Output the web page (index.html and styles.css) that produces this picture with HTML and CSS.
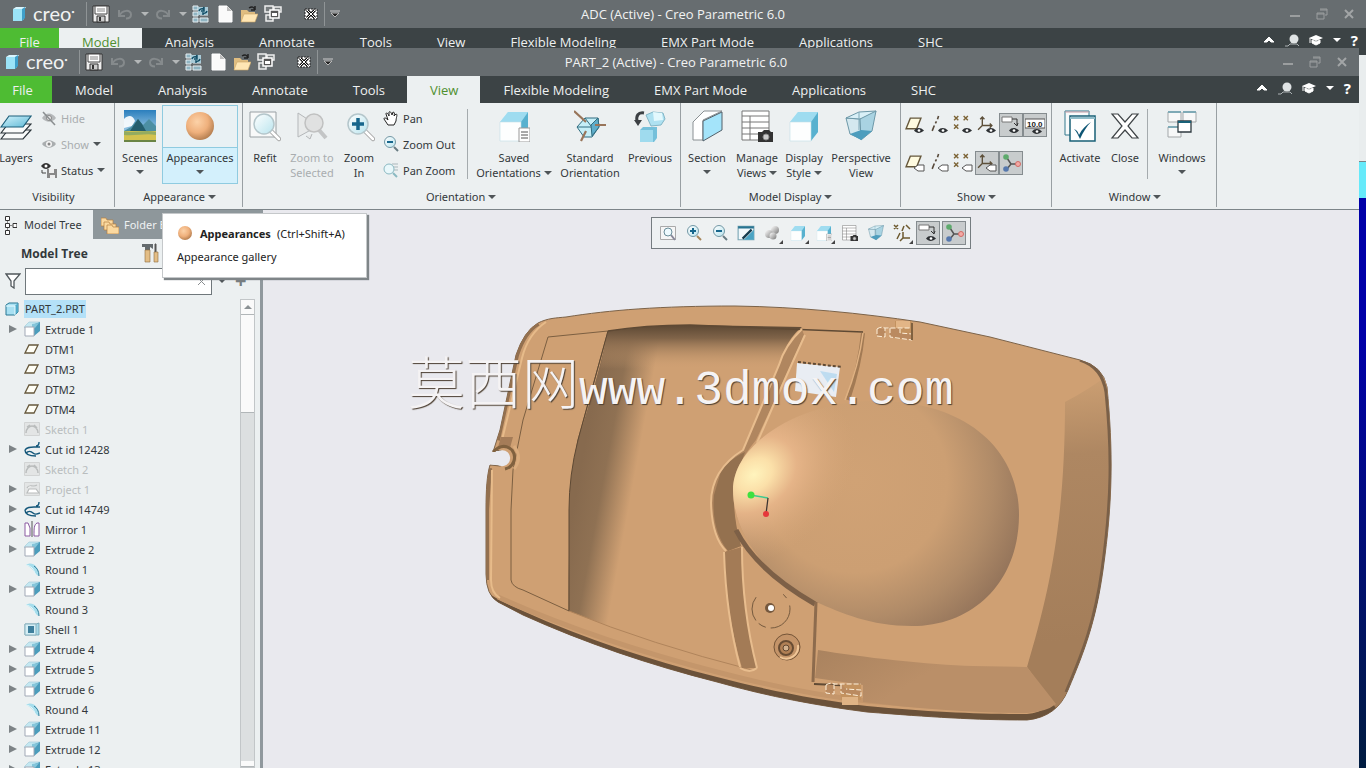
FILE: index.html
```html
<!DOCTYPE html>
<html lang="en">
<head>
<meta charset="utf-8">
<title>PART_2 (Active) - Creo Parametric 6.0</title>
<link rel="stylesheet" href="styles.css">
</head>
<body>
<svg class="defs" aria-hidden="true">
<defs>
<linearGradient id="gCyan" x1="0" y1="0" x2="1" y2="1"><stop offset="0" stop-color="#d4f3fc"/><stop offset="1" stop-color="#5db9d6"/></linearGradient>
<linearGradient id="gLens" x1="0" y1="0" x2="1" y2="1"><stop offset="0" stop-color="#fff"/><stop offset="1" stop-color="#b9e4ee"/></linearGradient>
<linearGradient id="gSky" x1="0" y1="0" x2="0" y2="1"><stop offset="0" stop-color="#2b7fbd"/><stop offset="1" stop-color="#d5eef8"/></linearGradient>
<radialGradient id="gBall" cx=".4" cy=".35" r=".65"><stop offset="0" stop-color="#fcd2a8"/><stop offset=".6" stop-color="#efb07c"/><stop offset="1" stop-color="#b98253"/></radialGradient>
<linearGradient id="gMetal" x1="0" y1="0" x2="1" y2="1"><stop offset="0" stop-color="#fff"/><stop offset="1" stop-color="#777"/></linearGradient>

<symbol id="logo" viewBox="0 0 16 16"><path d="M2 3l3-2h10l-2 3v9l-3 2H2z" fill="#d9f5fd"/><path d="M2 3h9v12H2z" fill="#9be3f7"/><path d="M11 3l3-2v11l-3 3z" fill="#3f9fca"/></symbol>
<symbol id="save" viewBox="0 0 18 18"><path d="M1 1h16v16H1z" fill="#eee" stroke="#333"/><path d="M3 1h12v8H3z" fill="#fff" stroke="#444"/><path d="M5 4h8M5 6h8" stroke="#888"/><path d="M5 11h8v6H5z" fill="#ccc" stroke="#333"/><path d="M7 12h2v4H7z" fill="#333"/></symbol>
<symbol id="undo" viewBox="0 0 18 18"><path d="M3 5v6h6M3.500 10.500C6 5 15 4 15 9.500c0 3-2 4-5 4" fill="none" stroke="#858a8c" stroke-width="2"/></symbol>
<symbol id="redo" viewBox="0 0 18 18"><path d="M15 5v6H9M14.500 10.500C12 5 3 4 3 9.500c0 3 2 4 5 4" fill="none" stroke="#858a8c" stroke-width="2"/></symbol>
<symbol id="regen" viewBox="0 0 18 18"><path d="M1 1h5v4H1zM1 7h5v4H1zM1 13h5v4H1zM8 13h8v4H8zM8 10h8" fill="#8fb4c2" stroke="#e6eef1"/><path d="M6 2h10v8H6z" fill="#a9cbd8"/><path d="M7 6a3 3 0 0 1 4-2l1-2v4H9M15 6a3 3 0 0 1-4 2v2" fill="none" stroke="#145068" stroke-width="1.500"/></symbol>
<symbol id="new" viewBox="0 0 18 18"><path d="M3 1h8l5 5v11H3z" fill="#fafafa" stroke="#fff"/><path d="M11 1v5h5z" fill="#bbb"/></symbol>
<symbol id="open" viewBox="0 0 18 18"><path d="M1 5h6l2 2h6v10H1z" fill="#e0bd80"/><path d="M4 9h14l-3 8H1z" fill="#ffe6b4" stroke="#c9a565" stroke-width=".6"/><path d="M9 3c3-2 5-1 6 2m0 0V1m0 4h-4" stroke="#222" stroke-width="1.500" fill="none"/></symbol>
<symbol id="wins" viewBox="0 0 18 18"><path d="M1 1h8v6H1zM10 2h7v5h-7zM2 10h7v6H2z" fill="#777c7e" stroke="#eee" stroke-width="1.500"/><path d="M6 5h9v8H6z" fill="#555" stroke="#fff" stroke-width="1.500"/><path d="M8 8h5v3H8z" fill="#fff"/></symbol>
<symbol id="closex" viewBox="0 0 16 16"><path d="M2 3h12v10H2z" fill="#fff" stroke="#222" stroke-dasharray="2 1"/><path d="M4 4l8 8M12 4l-8 8" stroke="#111" stroke-width="3"/><path d="M4 4l8 8M12 4l-8 8" stroke="#fff"/></symbol>
<symbol id="overflow" viewBox="0 0 12 12"><path d="M1 3h10" stroke="#ccc"/><path d="M2 5h8l-4 4z" fill="#222" stroke="#bbb"/></symbol>
<symbol id="caret" viewBox="0 0 8 6"><path d="M0 1h8L4 5z" fill="currentColor"/></symbol>
<symbol id="min" viewBox="0 0 12 12"><path d="M1 8h10" stroke="#9b9e9f" stroke-width="2"/></symbol>
<symbol id="restore" viewBox="0 0 12 12"><path d="M4 1h7v6H9M1 5h7v6H1zM1 6h7M4 2h7" fill="none" stroke="#9b9e9f"/></symbol>
<symbol id="x" viewBox="0 0 12 12"><path d="M2 2l8 8M10 2l-8 8" stroke="#a2a5a6" stroke-width="2"/></symbol>
<symbol id="clear" viewBox="0 0 12 12"><path d="M3 3l7 7M10 3l-7 7" stroke="#8b8f91"/></symbol>
<symbol id="up" viewBox="0 0 12 12"><path d="M1 8l5-5 5 5H8L6 6 4 8z" fill="#fff" stroke="#fff"/></symbol>
<symbol id="user" viewBox="0 0 14 14"><circle cx="9" cy="6" r="4.500" fill="#dfe3e4"/><path d="M0 13h3l2-2h7l2 2" stroke="#adb3b5" fill="none"/></symbol>
<symbol id="grad" viewBox="0 0 14 14"><path d="M7 2l7 3-7 3-7-3z" fill="#fff"/><path d="M3 7l4 2 4-2v3l-4 2-4-2zM1 5v5" fill="#fff" stroke="#fff"/></symbol>

<symbol id="layers" viewBox="0 0 32 32"><g stroke="#283238" stroke-width="1.200" fill="#f9fbfb"><path d="M1 29l7-9h23l-8 9z"/><path d="M1 23l7-9h23l-8 9z"/><path d="M1 17L9 6h22l-8 11z" fill="url(#gCyan)" stroke="#1d5f7a"/></g></symbol>
<symbol id="hide" viewBox="0 0 16 16"><path d="M1 8c4-6 10-6 14 0-4 5-10 5-14 0z" fill="#b5b8ba"/><circle cx="8" cy="8" r="2.500" fill="#eee" stroke="#888"/><path d="M2 2l12 13" stroke="#8b8f91" stroke-width="1.500"/></symbol>
<symbol id="show" viewBox="0 0 16 16"><path d="M1 8c4-5 10-5 14 0-4 5-10 5-14 0z" fill="#a9adaf"/><circle cx="8" cy="8" r="3" fill="#f4f4f4"/><circle cx="8" cy="8" r="1.500" fill="#888"/></symbol>
<symbol id="status" viewBox="0 0 16 16"><path d="M0 4c3-4 7-4 10 0-3 4-7 4-10 0z" fill="#333"/><circle cx="5" cy="4" r="1.500" fill="#fff"/><path d="M1 8v3h4" stroke="#444" fill="none"/><path d="M6 7h10v9H6z" fill="#888"/><path d="M8 7h5v4H8zM9 13h5v3H9z" fill="#eee"/></symbol>
<symbol id="scenes" viewBox="0 0 32 32"><path d="M0 0h32v32H0z" fill="url(#gSky)"/><path d="M0 9c5-5 9-3 11 2l-3 5-8 2z" fill="#fff" opacity=".9"/><path d="M0 21l7-4 7-8 5 6 6-6 7 7v8H0z" fill="#4c8fa3"/><path d="M8 18l6-9 4 5 4 7H6z" fill="#245d6c"/><path d="M0 21h32v11H0z" fill="#d3c24f"/><path d="M0 21c10 3 20-2 32 1v3c-10-2-20 1-32 0z" fill="#94ab60"/><path d="M0 30h32v2H0z" fill="#6a8444"/></symbol>
<symbol id="ball" viewBox="0 0 32 32"><circle cx="16" cy="16" r="14" fill="url(#gBall)"/></symbol>
<symbol id="mag" viewBox="0 0 32 32"><path d="M22 21l8 8" stroke="#a5a5a5" stroke-width="4.500" stroke-linecap="round"/><path d="M22 21l8 8" stroke="#fff" stroke-width="2.500" stroke-linecap="round"/><circle cx="15" cy="14" r="10" fill="url(#gLens)" stroke="#b4c6cb" stroke-width="1.500"/></symbol>
<symbol id="refit" viewBox="0 0 32 32"><path d="M1 2h26v25H1z" fill="#f8f9f9" stroke="#99a0a4"/><use href="#mag"/></symbol>
<symbol id="zsel" viewBox="0 0 32 32"><path d="M2 3v24l20-11zM10 26l4 3 2-5" fill="#e8eaea" stroke="#b4b7b9"/><path d="M23 20l7 8" stroke="#c3c5c6" stroke-width="4"/><circle cx="18" cy="13" r="9" fill="#e0e1e1" stroke="#c0c1c1" stroke-width="1.500"/></symbol>
<symbol id="zin" viewBox="0 0 32 32"><use href="#mag"/><path d="M9 14h12M15 8v12" stroke="#17668c" stroke-width="3.500"/></symbol>
<symbol id="zinS" viewBox="0 0 16 16"><path d="M11 11l4 4" stroke="#a7865b" stroke-width="2"/><circle cx="7" cy="6" r="5.500" fill="url(#gLens)" stroke="#7398a5"/><path d="M4 6h6M7 3v6" stroke="#17668c" stroke-width="2"/></symbol>
<symbol id="zoutS" viewBox="0 0 16 16"><path d="M11 11l4 4" stroke="#687b82" stroke-width="2"/><circle cx="7" cy="6" r="5.500" fill="url(#gLens)" stroke="#7398a5"/><path d="M4 6h6" stroke="#17668c" stroke-width="2"/></symbol>
<symbol id="refitS" viewBox="0 0 16 16"><path d="M.5 1.500h15v13H.5z" fill="#f6f6f6" stroke="#aaa"/><path d="M11 10l4 5" stroke="#889" stroke-width="2"/><circle cx="8" cy="7" r="4" fill="#eefafe" stroke="#6a8d99"/></symbol>
<symbol id="hand" viewBox="0 0 16 16"><path d="M5 15L1 9c0-2 2-1 4 1L3 4c0-2 2-1 3 2L6 2c1-1 2 0 3 3l1-3c1 0 2 1 1 4l2-2c2 0 0 4 0 7l-2 4z" fill="#fff" stroke="#222"/></symbol>
<symbol id="pzoom" viewBox="0 0 16 16"><path d="M9 2h6M10 5h5M11 8h4" stroke="#aab7bb"/><circle cx="6" cy="7" r="5" fill="#e9f8fb" stroke="#8bb9c2"/><path d="M10 11l4 4" stroke="#8bb9c2" stroke-width="2"/></symbol>
<symbol id="cube" viewBox="0 0 32 32"><path d="M2 12L10 2h20v20l-8 9H2z" fill="#bfeaf7"/><path d="M2 12L10 2h20l-7 10z" fill="#9fdcf0"/><path d="M23 12l7-10v20l-7 9z" fill="#58b1cf"/><path d="M2 12h21v19H2z" fill="#fdfefe" stroke="#c4dfe7" stroke-width=".6"/></symbol>
<symbol id="saved" viewBox="0 0 32 32"><use href="#cube"/><path d="M21 18h11v14H21z" fill="#fff" stroke="#999"/><path d="M23 22h7M23 25h7M23 28h7" stroke="#555"/></symbol>
<symbol id="stdo" viewBox="0 0 32 32"><path d="M3 17l8-9h13l1 9-7 10H10z" fill="#c5eef7" stroke="#316d80"/><path d="M17 15l7-7 1 9-7 9z" fill="#5eaecb" stroke="#316d80"/><path d="M3 17h14M11 8l6 8" stroke="#316d80"/><path d="M0 1l12 11M21 15h11M12 21L7 31" stroke="#98755a" stroke-width="2.200"/></symbol>
<symbol id="prev" viewBox="0 0 32 32"><path d="M10 3c-6-1-8 3-7 8" fill="none" stroke="#3c4044" stroke-width="3"/><path d="M0 10h8l-4 6z" fill="#3c4044"/><path d="M12 5l7-3 10 1 2 6-4 6-10 1z" fill="#aee1f1" stroke="#83b6c6"/><path d="M19 2l9 1 1 7-9 1z" fill="#e3f8fd"/><path d="M6 20l3-3h14v11l-3 4H6z" fill="#75c0da"/><path d="M6 20h13v12H6z" fill="#9fdbee"/></symbol>
<symbol id="section" viewBox="0 0 32 32"><path d="M2 12L13 1h18L12 10v20H2z" fill="#fff" stroke="#8a9093"/><path d="M12 11l19-9v18l-19 11z" fill="#a4e4fa" stroke="#53616a"/></symbol>
<symbol id="manage" viewBox="0 0 32 32"><path d="M1 1h27v29H1z" fill="#fff" stroke="#777"/><path d="M1 6h27M1 12h27M1 18h27M1 24h27M9 6v24" stroke="#777"/><path d="M17 22h4l2-2h5l2 2h2v10H17z" fill="#333"/><circle cx="25" cy="27" r="3" fill="#ccc" stroke="#888"/></symbol>
<symbol id="persp" viewBox="0 0 32 32"><path d="M1 8l14 1 1 20L5 24z" fill="#d4e8ef" stroke="#6d98a8"/><path d="M1 8L14 2l17-1-4 8H15z" fill="#d9f0f7" stroke="#6d98a8"/><path d="M15 9l16-8-4 20-11 9z" fill="#a9d3e2" stroke="#6d98a8"/><path d="M5 24l11-4 11 1-11 9z" fill="#4d9dbd"/><path d="M14 2v18" stroke="#7fa9b8"/></symbol>
<symbol id="eye" viewBox="0 0 12 8"><path d="M0 4c3-4 8-4 12 0-4 4-9 4-12 0z" fill="#2d3033"/><circle cx="6" cy="4" r="1.600" fill="#fff"/></symbol>
<symbol id="tag" viewBox="0 0 12 8"><path d="M1 4l4-3h6v6H5z" fill="#fff" stroke="#555"/></symbol>
<symbol id="plane" viewBox="0 0 16 16"><path d="M1 12L5 2h10l-4 10z" fill="#fffbe0" stroke="#66583c" stroke-width="1.300"/></symbol>
<symbol id="axis" viewBox="0 0 16 16"><path d="M3 14l2-5M6 7l1-2M8 3l1-3" stroke="#57493a" stroke-width="1.500"/></symbol>
<symbol id="pts" viewBox="0 0 16 16"><path d="M1 1l4 4M5 1L1 5M10 1l4 4M14 1l-4 4M1 9l4 4M5 9l-4 4" stroke="#7c6436" stroke-width="1.300"/></symbol>
<symbol id="csys" viewBox="0 0 16 16"><path d="M5 1v8l-4 4M5 9h9M3 3l2-2 2 2M12 7l2 2-2 2" fill="none" stroke="#5d503a" stroke-width="1.300"/></symbol>
<symbol id="note" viewBox="0 0 20 20"><path d="M1 2h10v5H1z" fill="#fff" stroke="#777"/><path d="M11 4h5v6M13 8l3 3 1-3" stroke="#333" fill="none"/><use href="#eye" x="8" y="12" width="10" height="7"/></symbol>
<symbol id="spin" viewBox="0 0 20 20"><path d="M6 5l4 6-4 5M10 11h7" stroke="#555" stroke-width="1.500" fill="none"/><circle cx="5" cy="4" r="2.800" fill="#5daa6c"/><circle cx="5" cy="16" r="2.800" fill="#5678ad"/><circle cx="17" cy="11" r="2.500" fill="#f3aaa5" stroke="#d16b65"/></symbol>
<symbol id="activate" viewBox="0 0 32 32"><path d="M1 1h24v24H1z" fill="#f8fafb" stroke="#33798d"/><path d="M1 2h24" stroke="#c89da8"/><path d="M6 6h25v25H6z" fill="#fff" stroke="#186077" stroke-width="1.500"/><path d="M6 8h25" stroke="#90bdca" stroke-width="2"/><path d="M10 19c3 1 4 3 5 6 3-6 7-10 12-13-4 4-8 10-11 17-2-4-3-7-6-10z" fill="#0d5574"/></symbol>
<symbol id="closeB" viewBox="0 0 32 32"><path d="M3 4h6l7 8 7-8h6L19 16l10 12h-6l-7-8-7 8H3l10-12z" fill="#fff" stroke="#3e4346" stroke-width="1.200"/></symbol>
<symbol id="windows" viewBox="0 0 32 32"><g fill="#f7f8f8" stroke="#a3a7a9"><path d="M2 2h13v10H2zM17 2h13v10H17zM2 17h13v10H2z"/></g><path d="M2 2h13M17 2h13M2 17h13" stroke="#7faab6" stroke-width="2"/><path d="M12 11h13v11H12z" fill="#fff" stroke="#2f3a40" stroke-width="1.300"/><path d="M12 12h13" stroke="#186077" stroke-width="2"/></symbol>

<symbol id="mtree" viewBox="0 0 16 20"><path d="M4.500 1.500h4v4h-4zM4.500 8.500h4v4h-4zM4.500 15.500h4v4h-4zM12 8.500h4v4h-4z" fill="#fff" stroke="#333"/><path d="M9 10.500h3M6.500 6v2M6.500 13v2" stroke="#888"/></symbol>
<symbol id="folders" viewBox="0 0 18 18"><g fill="#fbd9a0" stroke="#b5803f" stroke-width=".7"><path d="M0 2h5l1 2h6v6H0z"/><path d="M3 6h5l1 2h6v6H3z"/><path d="M6 9h5l1 2h6v7H6z"/></g></symbol>
<symbol id="tools" viewBox="0 0 18 20"><path d="M1 1h11v5L9 4v3H4V4H1z" fill="#646a6d"/><path d="M4 7h5v12H4z" fill="#e3bd85" stroke="#8d6b3d" stroke-width=".6"/><path d="M14 1h1v8h-1z" fill="#555" stroke="#555"/><path d="M13 9h4v10h-4z" fill="#e3bd85" stroke="#8d6b3d" stroke-width=".6"/></symbol>
<symbol id="funnel" viewBox="0 0 16 16"><path d="M1 1h14L9 8v7l-3-2V8z" fill="#fff" stroke="#50575b" stroke-width="1.300"/></symbol>
<symbol id="part" viewBox="0 0 16 16"><path d="M2 4l3-2h9v9l-3 3H2z" fill="#a8e0f2" stroke="#287793"/><path d="M11 5l3-3v9l-3 3z" fill="#4fa9c8"/><path d="M2 5h9v9" fill="none" stroke="#e9fbff"/></symbol>
<symbol id="extr" viewBox="0 0 16 16"><path d="M0 6l5-5h11l-5 6H1z" fill="#c3e7f1" stroke="#9cc8d6" stroke-width=".6"/><path d="M8 4l8-3v9l-6 5V6z" fill="#4c9dbc"/><path d="M8 3l7-1-4 5-3 1z" fill="#84c5da"/><path d="M1 6h9v9H1z" fill="#fff" stroke="#a2a9b6"/></symbol>
<symbol id="datum" viewBox="0 0 16 16"><path d="M1 12L5 4h9l-4 8z" fill="#fffef5" stroke="#66583c" stroke-width="1.300"/></symbol>
<symbol id="sk" viewBox="0 0 16 16"><path d="M.5 1.500h15v13H.5z" fill="#e3e5e5" stroke="#d2d4d4"/><path d="M2 12c0-4 3-7 6-7s6 3 6 7M3 6l3-2M10 4l3 3" fill="none" stroke="#b9bcbc" stroke-width="1.500"/></symbol>
<symbol id="proj" viewBox="0 0 16 16"><path d="M.5 1.500h15v13H.5z" fill="#e3e5e5" stroke="#d2d4d4"/><path d="M3 12l2-4h7l3 4zM3 7c2-5 5 0 10-3" fill="#fff" stroke="#b9bcbc" stroke-width="1.200"/></symbol>
<symbol id="cut" viewBox="0 0 16 16"><path d="M15 1c0 3-1 4-3 4M1 9c2-3 5-3 9-3h6M2 12c2-2 5-2 7 0 2 2 5 1 7 0M1 9c0 3 3 6 11 6" fill="none" stroke="#14577a" stroke-width="1.400"/></symbol>
<symbol id="mir" viewBox="0 0 16 16"><path d="M1 2h3l2 5v8H1z M15 2h-2c-3 2-3 5-3 13h5z" fill="#fff" stroke="#8b5aa1"/><path d="M8 0v16" stroke="#555"/></symbol>
<symbol id="rnd" viewBox="0 0 16 16"><path d="M2 4c5-4 13 0 13 11-4-1-4-7-13-11z" fill="#a5ddec"/><path d="M10 5c3 2 5 5 5 10" stroke="#327e9b" fill="none"/><path d="M2 4c5 1 8 4 9 9" stroke="#e6f7fb" fill="none"/></symbol>
<symbol id="shell" viewBox="0 0 16 16"><path d="M1 3h11l3-1v12H1z" fill="#a5d8e7" stroke="#6b9fb0" stroke-width=".8"/><path d="M1 3h11v11H1z" fill="#d4eef5" stroke="#8bb2bf"/><path d="M4 5h6v7H4z" fill="#3e7f9d"/></symbol>
<symbol id="repaint" viewBox="0 0 16 16"><path d="M1 2h14v12H1z" fill="#f1f8fb" stroke="#7ba7b5"/><path d="M1 3h14" stroke="#287390" stroke-width="2"/><path d="M6 14L15 5v9z" fill="#4aa3c3"/><path d="M5 13l8-8" stroke="#143b4d" stroke-width="2"/></symbol>
<symbol id="render" viewBox="0 0 16 16"><circle cx="11" cy="5" r="4" fill="url(#gMetal)"/><circle cx="5" cy="9" r="4" fill="url(#gMetal)"/><circle cx="9" cy="11" r="3.500" fill="url(#gMetal)"/></symbol>
</defs>
</svg>

<section class="window window-back" aria-label="ADC">
  <header class="titlebar">
    <div class="quick">
      <svg class="i16"><use href="#logo"/></svg><span class="brand">creo<sup>•</sup></span>
      <span class="vline"></span>
      <button class="q" aria-label="Save"><svg class="i18"><use href="#save"/></svg></button>
      <button class="q wide" aria-label="Undo"><svg class="i18"><use href="#undo"/></svg><svg class="caret pale"><use href="#caret"/></svg></button>
      <button class="q wide" aria-label="Redo"><svg class="i18"><use href="#redo"/></svg><svg class="caret pale"><use href="#caret"/></svg></button>
      <button class="q" aria-label="Regenerate"><svg class="i18"><use href="#regen"/></svg></button>
      <button class="q" aria-label="New"><svg class="i18"><use href="#new"/></svg></button>
      <button class="q" aria-label="Open"><svg class="i18"><use href="#open"/></svg></button>
      <button class="q" aria-label="Windows"><svg class="i18"><use href="#wins"/></svg></button>
      <button class="q last" aria-label="Close window"><svg class="i16"><use href="#closex"/></svg></button>
      <span class="vline end"></span>
      <button class="q" aria-label="Customize"><svg class="i12"><use href="#overflow"/></svg></button>
    </div>
    <h1 class="caption">ADC (Active) - Creo Parametric 6.0</h1>
    <div class="controls"><button aria-label="Minimize"><svg class="i12"><use href="#min"/></svg></button><button aria-label="Restore"><svg class="i12"><use href="#restore"/></svg></button><button aria-label="Close"><svg class="i12"><use href="#x"/></svg></button></div>
  </header>
  <nav class="tabs">
    <button class="tab file">File</button><button class="tab active">Model</button><button class="tab">Analysis</button><button class="tab">Annotate</button><button class="tab">Tools</button><button class="tab">View</button><button class="tab">Flexible Modeling</button><button class="tab">EMX Part Mode</button><button class="tab">Applications</button><button class="tab">SHC</button>
    <div class="tab-tools"><svg class="i12"><use href="#up"/></svg><svg class="i14"><use href="#user"/></svg><svg class="i14"><use href="#grad"/></svg><svg class="caret white"><use href="#caret"/></svg><span class="help">?</span></div>
  </nav>
</section>

<section class="window window-front" aria-label="PART_2">
  <header class="titlebar">
    <div class="quick">
      <svg class="i16"><use href="#logo"/></svg><span class="brand">creo<sup>•</sup></span>
      <span class="vline"></span>
      <button class="q" aria-label="Save"><svg class="i18"><use href="#save"/></svg></button>
      <button class="q wide" aria-label="Undo"><svg class="i18"><use href="#undo"/></svg><svg class="caret pale"><use href="#caret"/></svg></button>
      <button class="q wide" aria-label="Redo"><svg class="i18"><use href="#redo"/></svg><svg class="caret pale"><use href="#caret"/></svg></button>
      <button class="q" aria-label="Regenerate"><svg class="i18"><use href="#regen"/></svg></button>
      <button class="q" aria-label="New"><svg class="i18"><use href="#new"/></svg></button>
      <button class="q" aria-label="Open"><svg class="i18"><use href="#open"/></svg></button>
      <button class="q" aria-label="Windows"><svg class="i18"><use href="#wins"/></svg></button>
      <button class="q last" aria-label="Close window"><svg class="i16"><use href="#closex"/></svg></button>
      <span class="vline end"></span>
      <button class="q" aria-label="Customize"><svg class="i12"><use href="#overflow"/></svg></button>
    </div>
    <h1 class="caption">PART_2 (Active) - Creo Parametric 6.0</h1>
    <div class="controls"><button aria-label="Minimize"><svg class="i12"><use href="#min"/></svg></button><button aria-label="Restore"><svg class="i12"><use href="#restore"/></svg></button><button aria-label="Close"><svg class="i12"><use href="#x"/></svg></button></div>
  </header>
  <nav class="tabs">
    <button class="tab file">File</button><button class="tab">Model</button><button class="tab">Analysis</button><button class="tab">Annotate</button><button class="tab">Tools</button><button class="tab active">View</button><button class="tab">Flexible Modeling</button><button class="tab">EMX Part Mode</button><button class="tab">Applications</button><button class="tab">SHC</button>
    <div class="tab-tools"><svg class="i12"><use href="#up"/></svg><svg class="i14"><use href="#user"/></svg><svg class="i14"><use href="#grad"/></svg><svg class="caret white"><use href="#caret"/></svg><span class="help">?</span></div>
  </nav>

  <div class="ribbon">
    <section class="group g-vis">
      <div class="tools">
        <button class="big w44"><svg class="i32"><use href="#layers"/></svg><span>Layers</span></button>
        <div class="stack">
          <button class="small" disabled><svg class="i16"><use href="#hide"/></svg>Hide</button>
          <button class="small" disabled><svg class="i16"><use href="#show"/></svg>Show<svg class="caret"><use href="#caret"/></svg></button>
          <button class="small"><svg class="i16"><use href="#status"/></svg>Status<svg class="caret"><use href="#caret"/></svg></button>
        </div>
      </div>
      <div class="label">Visibility</div>
    </section>
    <section class="group g-app">
      <div class="tools">
        <button class="big w44"><svg class="i32"><use href="#scenes"/></svg><span>Scenes</span><svg class="caret"><use href="#caret"/></svg></button>
        <button class="big hot"><svg class="i32"><use href="#ball"/></svg><span>Appearances</span><svg class="caret"><use href="#caret"/></svg></button>
      </div>
      <div class="label">Appearance <svg class="caret"><use href="#caret"/></svg></div>
    </section>
    <section class="group g-ori">
      <div class="tools">
        <button class="big w44"><svg class="i32"><use href="#refit"/></svg><span>Refit</span></button>
        <button class="big w50" disabled><svg class="i32"><use href="#zsel"/></svg><span>Zoom to<br>Selected</span></button>
        <button class="big w44"><svg class="i32"><use href="#zin"/></svg><span>Zoom<br>In</span></button>
        <div class="stack">
          <button class="small"><svg class="i16"><use href="#hand"/></svg>Pan</button>
          <button class="small"><svg class="i16"><use href="#zoutS"/></svg>Zoom Out</button>
          <button class="small"><svg class="i16"><use href="#pzoom"/></svg>Pan Zoom</button>
        </div>
        <span class="split"></span>
        <button class="big w88"><svg class="i32"><use href="#saved"/></svg><span>Saved<br>Orientations <svg class="caret"><use href="#caret"/></svg></span></button>
        <button class="big w64"><svg class="i32"><use href="#stdo"/></svg><span>Standard<br>Orientation</span></button>
        <button class="big w56"><svg class="i32"><use href="#prev"/></svg><span>Previous</span></button>
      </div>
      <div class="label">Orientation <svg class="caret"><use href="#caret"/></svg></div>
    </section>
    <section class="group g-dis">
      <div class="tools">
        <button class="big w50"><svg class="i32"><use href="#section"/></svg><span>Section</span><svg class="caret"><use href="#caret"/></svg></button>
        <button class="big w50"><svg class="i32"><use href="#manage"/></svg><span>Manage<br>Views <svg class="caret"><use href="#caret"/></svg></span></button>
        <button class="big w44"><svg class="i32"><use href="#cube"/></svg><span>Display<br>Style <svg class="caret"><use href="#caret"/></svg></span></button>
        <button class="big w70"><svg class="i32"><use href="#persp"/></svg><span>Perspective<br>View</span></button>
      </div>
      <div class="label">Model Display <svg class="caret"><use href="#caret"/></svg></div>
    </section>
    <section class="group g-show">
      <div class="tools">
        <div class="toggles">
          <button aria-label="Plane display"><svg class="i20" viewBox="0 0 20 20"><use href="#plane" width="17" height="17" y="1"/><use href="#eye" x="9" y="12" width="10" height="7"/></svg></button>
          <button aria-label="Axis display"><svg class="i20" viewBox="0 0 20 20"><use href="#axis" width="17" height="19"/><use href="#eye" x="9" y="12" width="10" height="7"/></svg></button>
          <button aria-label="Point display"><svg class="i20" viewBox="0 0 20 20"><use href="#pts" width="17" height="17"/><use href="#eye" x="9" y="12" width="10" height="7"/></svg></button>
          <button aria-label="Csys display"><svg class="i20" viewBox="0 0 20 20"><use href="#csys" width="17" height="19"/><use href="#eye" x="9" y="12" width="10" height="7"/></svg></button>
          <button class="on" aria-label="Annotation display"><svg class="i20"><use href="#note"/></svg></button>
          <button class="on" aria-label="Dimension display"><svg class="i20" viewBox="0 0 20 20"><path d="M0 4h20v9H0z" fill="#fff" stroke="#555"/><text x="2" y="12" class="dim">10.0</text><use href="#eye" x="7" y="13" width="10" height="7"/></svg></button>
          <button aria-label="Plane tags"><svg class="i20" viewBox="0 0 20 20"><use href="#plane" width="17" height="17" y="1"/><use href="#tag" x="8" y="11" width="12" height="8"/></svg></button>
          <button aria-label="Axis tags"><svg class="i20" viewBox="0 0 20 20"><use href="#axis" width="17" height="19"/><use href="#tag" x="8" y="11" width="12" height="8"/></svg></button>
          <button aria-label="Point tags"><svg class="i20" viewBox="0 0 20 20"><use href="#pts" width="17" height="17"/><use href="#tag" x="8" y="11" width="12" height="8"/></svg></button>
          <button class="on" aria-label="Csys tags"><svg class="i20" viewBox="0 0 20 20"><use href="#csys" width="17" height="19"/><use href="#tag" x="8" y="11" width="12" height="8"/></svg></button>
          <button class="on" aria-label="Spin center"><svg class="i20"><use href="#spin"/></svg></button>
        </div>
      </div>
      <div class="label">Show <svg class="caret"><use href="#caret"/></svg></div>
    </section>
    <section class="group g-win">
      <div class="tools">
        <button class="big w50"><svg class="i32"><use href="#activate"/></svg><span>Activate</span></button>
        <button class="big w40"><svg class="i32"><use href="#closeB"/></svg><span>Close</span></button>
        <span class="split"></span>
        <button class="big w64"><svg class="i32"><use href="#windows"/></svg><span>Windows</span><svg class="caret"><use href="#caret"/></svg></button>
      </div>
      <div class="label">Window <svg class="caret"><use href="#caret"/></svg></div>
    </section>
  </div>

  <div class="work">
    <aside class="side">
      <div class="side-tabs">
        <button class="side-tab current"><svg class="mtree"><use href="#mtree"/></svg>Model Tree</button>
        <button class="side-tab"><svg class="i18"><use href="#folders"/></svg>Folder Browser</button>
      </div>
      <div class="side-head"><h2>Model Tree</h2><svg class="i20"><use href="#tools"/></svg></div>
      <div class="filter">
        <svg class="i16"><use href="#funnel"/></svg>
        <div class="field"><input type="text" aria-label="Filter"><svg class="i12"><use href="#clear"/></svg></div>
        <svg class="caret"><use href="#caret"/></svg>
        <button class="plus" aria-label="Add">+</button>
      </div>
      <div class="tree-box">
        <ul class="tree">
          <li class="root"><svg class="i16"><use href="#part"/></svg><span>PART_2.PRT</span></li>
          <li class="open"><svg class="i16"><use href="#extr"/></svg>Extrude 1</li>
          <li><svg class="i16"><use href="#datum"/></svg>DTM1</li>
          <li><svg class="i16"><use href="#datum"/></svg>DTM3</li>
          <li><svg class="i16"><use href="#datum"/></svg>DTM2</li>
          <li><svg class="i16"><use href="#datum"/></svg>DTM4</li>
          <li class="dim-row"><svg class="i16"><use href="#sk"/></svg>Sketch 1</li>
          <li class="open"><svg class="i16"><use href="#cut"/></svg>Cut id 12428</li>
          <li class="dim-row"><svg class="i16"><use href="#sk"/></svg>Sketch 2</li>
          <li class="dim-row open"><svg class="i16"><use href="#proj"/></svg>Project 1</li>
          <li class="open"><svg class="i16"><use href="#cut"/></svg>Cut id 14749</li>
          <li class="open"><svg class="i16"><use href="#mir"/></svg>Mirror 1</li>
          <li class="open"><svg class="i16"><use href="#extr"/></svg>Extrude 2</li>
          <li><svg class="i16"><use href="#rnd"/></svg>Round 1</li>
          <li class="open"><svg class="i16"><use href="#extr"/></svg>Extrude 3</li>
          <li><svg class="i16"><use href="#rnd"/></svg>Round 3</li>
          <li><svg class="i16"><use href="#shell"/></svg>Shell 1</li>
          <li class="open"><svg class="i16"><use href="#extr"/></svg>Extrude 4</li>
          <li class="open"><svg class="i16"><use href="#extr"/></svg>Extrude 5</li>
          <li class="open"><svg class="i16"><use href="#extr"/></svg>Extrude 6</li>
          <li><svg class="i16"><use href="#rnd"/></svg>Round 4</li>
          <li class="open"><svg class="i16"><use href="#extr"/></svg>Extrude 11</li>
          <li class="open"><svg class="i16"><use href="#extr"/></svg>Extrude 12</li>
          <li class="open"><svg class="i16"><use href="#extr"/></svg>Extrude 13</li>
        </ul>
        <div class="scroll"><span class="sb up"></span><span class="thumb"></span><span class="track"></span><span class="sb down"></span></div>
      </div>
    </aside>

    <main class="canvas">
      <svg class="model" viewBox="263 210 1096 558" role="img" aria-label="Shaded part model">
        <defs>
          <linearGradient id="mLeft" gradientUnits="userSpaceOnUse" x1="580" y1="470" x2="634" y2="480"><stop offset="0" stop-color="#876a4e"/><stop offset=".45" stop-color="#8f7153"/><stop offset="1" stop-color="#cfa073"/></linearGradient>
          <linearGradient id="mTop" x1="0" y1="0" x2="0" y2="1"><stop offset="0" stop-color="#5c4834"/><stop offset=".3" stop-color="#806449"/><stop offset="1" stop-color="#cfa073" stop-opacity="0"/></linearGradient>
          <radialGradient id="mDome" gradientUnits="userSpaceOnUse" cx="855" cy="480" r="185"><stop offset="0" stop-color="#d0a275"/><stop offset=".5" stop-color="#cc9f73"/><stop offset=".75" stop-color="#b08b68"/><stop offset="1" stop-color="#8f7058"/></radialGradient>
          <radialGradient id="mGlow" gradientUnits="userSpaceOnUse" cx="754" cy="475" r="110" gradientTransform="rotate(-35 754 475) scale(1 .75) translate(0 158)"><stop offset="0" stop-color="#fff4bd"/><stop offset=".18" stop-color="#fbe0a9"/><stop offset=".42" stop-color="#e8b68a" stop-opacity=".9"/><stop offset="1" stop-color="#d5a578" stop-opacity="0"/></radialGradient>
          <linearGradient id="mBevel" gradientUnits="userSpaceOnUse" x1="1060" y1="375" x2="1080" y2="640"><stop offset="0" stop-color="#cda073"/><stop offset=".3" stop-color="#ae8762"/><stop offset="1" stop-color="#a47e5a"/></linearGradient>
          <linearGradient id="mBot" gradientUnits="userSpaceOnUse" x1="820" y1="650" x2="860" y2="715"><stop offset="0" stop-color="#aa835f"/><stop offset="1" stop-color="#ba8f68"/></linearGradient>
          <clipPath id="mClip"><path d="M538 323C548 318 556 318 566 317C610 310 660 306 735 306C800 307 860 313 920 322L990 337L1080 360Q1103 366 1107 387C1113 450 1113 500 1103 570C1096 620 1085 650 1068 690Q1057 717 1027 720C975 720 930 717 867 712C820 706 770 697 717 682C650 665 585 643 523 615L498 602Q486 595 486 574L486 510C486 490 487 475 490 465L500 466A8 8 0 1 0 493 452L500 430L516 355Q524 331 538 323Z"/></clipPath>
        </defs>
        <path d="M538 323C548 318 556 318 566 317C610 310 660 306 735 306C800 307 860 313 920 322L990 337L1080 360Q1103 366 1107 387C1113 450 1113 500 1103 570C1096 620 1085 650 1068 690Q1057 717 1027 720C975 720 930 717 867 712C820 706 770 697 717 682C650 665 585 643 523 615L498 602Q486 595 486 574L486 510C486 490 487 475 490 465L500 466A8 8 0 1 0 493 452L500 430L516 355Q524 331 538 323Z" fill="#cfa073" stroke="#7c6349"/>
        <g clip-path="url(#mClip)">
          <path d="M486 590Q490 597 523 611C585 639 650 660 717 677C770 691 820 700 867 706C930 712 975 714 1027 714Q1050 712 1062 690L1080 650L1110 560V735H480z" fill="#6b523a"/>
          <path d="M498 597C560 625 640 652 717 672C770 686 820 696 867 701C930 707 980 709 1027 709" fill="none" stroke="#c4966b" stroke-width="5"/>
          <path d="M538 323Q524 331 516 355L497 440M489 468L486 510V580" fill="none" stroke="#93704f" stroke-width="6"/>
          <path d="M546 322Q528 334 522 358L502 440M492 470L491 580Q491 593 500 598" fill="none" stroke="#e7bb8a" stroke-width="2"/>
          <path d="M1065 402Q1088 390 1108 375L1114 500L1090 640L1060 714L1027 667C1050 590 1065 520 1065 402Z" fill="url(#mBevel)"/>
          <path d="M818 650C860 657 930 665 973 666L1027 667L1056 704Q1046 712 1027 713C975 713 920 709 863 702V685L815 678Z" fill="url(#mBot)"/>
          <path d="M1080 360Q1102 367 1106 392C1112 450 1112 500 1102 570C1095 620 1084 650 1066 692" fill="none" stroke="#7a6048" stroke-width="3"/>
        </g>
        <path d="M548 337L608 331L578 440Q569 480 569 611L523 590Q512 587 511 580V510L513 470L523 420Z" fill="#cfa073" stroke="#7c5f41"/>
        <path d="M608 331Q645 325 690 325L802 327Q790 335 782 355L742 450Q711 470 711 503Q712 535 726 550L737 666Q660 646 569 611V510Q569 475 578 440Q600 370 608 331Z" fill="url(#mLeft)"/>
        <path d="M608 331Q645 325 690 325L802 327Q788 337 776 369H600Z" fill="url(#mTop)"/>
        <path d="M608 331L578 440Q569 475 569 510V611" fill="none" stroke="#5e4934"/>
        <path d="M608 331Q645 325 690 325L863 332" fill="none" stroke="#5e4934" stroke-width="1.500"/>
        <path d="M569 611Q650 644 752 670" fill="none" stroke="#b0845b"/>
        <path d="M802 329Q785 345 779 365L743 450Q711 470 711 503Q712 537 728 551L741 546Q733 520 733 490Q735 465 756 440Q782 385 804 335Z" fill="#b0865f"/>
        <path d="M722 468Q737 455 745 452L735 480Q731 510 741 546L728 551Q711 530 714 495Z" fill="#94714f"/>
        <path d="M724 552L742 547Q742 610 757 668L742 668Q726 615 724 552Z" fill="#a37b56"/>
        <path d="M802 329Q785 345 779 365L743 450Q711 470 711 503Q712 537 726 551M805 335Q782 385 757 443M724 552Q726 615 740 667M742 547Q742 610 757 668M740 668Q750 674 757 668" fill="none" stroke="#e8bd8e" stroke-width="2"/>
        <path d="M863 333Q860 365 848 400" fill="none" stroke="#a27a54" stroke-width="4"/><path d="M863 333Q859 365 845 400" fill="none" stroke="#e0b283" stroke-width="1.500"/>
        <path d="M797 363L840 367L836 397L795 391Z" fill="#e9edf3"/><path d="M798 362l44 5" stroke="#5e4934" stroke-width="2" stroke-dasharray="3 2"/><path d="M820 371l17 3-3 18z" fill="#bedcf0"/>
        <path d="M733 490C733 442 802 402 872 401C960 399 1019 445 1019 515C1019 580 975 626 912 626C870 626 842 613 816 602C776 584 733 540 733 490Z" fill="url(#mDome)"/>
        <path d="M733 490C733 442 802 402 872 401C960 399 1019 445 1019 515C1019 580 975 626 912 626C870 626 842 613 816 602C776 584 733 540 733 490Z" fill="url(#mGlow)"/>
        <path d="M736 530Q756 570 815 604" fill="none" stroke="#7d6047" stroke-width="5"/>
        <path d="M816 602L813 682" stroke="#8d6b4d" stroke-width="3"/><path d="M814 684L858 686" stroke="#604a34" stroke-width="2"/>
        <g fill="none"><circle cx="771" cy="609" r="19" stroke="#765a3e" stroke-dasharray="30 5 8 4 25"/><circle cx="770" cy="608" r="5" fill="#75583e"/><circle cx="771" cy="608" r="3" fill="#fff"/><circle cx="787" cy="647" r="13" fill="#c49469" stroke="#745437"/><path d="M780 657A12 12 0 0 0 798 645" stroke="#f0c697" stroke-width="2"/><circle cx="786" cy="648" r="7" fill="#b18055" stroke="#684c33" stroke-width="2"/><circle cx="786" cy="648" r="3" fill="#d3b18e" stroke="#604630"/></g>
        <g fill="#ba8a60" stroke="#fff1db" stroke-dasharray="5 2"><path d="M895 321h17v18h-17z" fill="#c3925f" stroke="none"/><path d="M896 321h14v7h-14z" fill="#e2b586" stroke="none"/><path d="M877 329q4-3 8-1h26M877 329v7l8 1v-9M890 328v9l22 3v-6l-12-1v-4"/><path d="M912 323v17" stroke="#80613f" stroke-dasharray="none" stroke-width="2"/></g>
        <g fill="#ba8a60" stroke="#fff1db" stroke-dasharray="5 2"><path d="M840 684h21v16h-20z" fill="#c3925f" stroke="none"/><path d="M842 697h16v8h-16z" fill="#dfb385" stroke="none"/><path d="M826 685q4-3 9-1h26M826 685v8l8 1v-10M841 684v9l20 3v-6l-15-1"/></g>
        <path d="M501 437h12l-3 11-12-1z" fill="#a57c58"/><path d="M493 452Q503 442 512 450A12 12 0 0 1 505 469" fill="none" stroke="#80613f" stroke-width="3"/><path d="M489 452h8a8 8 0 1 1 1 13l-10-1z" fill="#e9e9ee"/>
        <path d="M514 446Q523 458 514 469" fill="none" stroke="#dbad7e" stroke-width="3"/>
        <path d="M750 495L768 498" stroke="#3ec98f" stroke-width="1.500"/><path d="M768 498L766 514" stroke="#3c3430" stroke-width="1.200"/><circle cx="751" cy="495" r="3.500" fill="#3fe03f"/><circle cx="766" cy="514" r="3" fill="#e5383b"/>
      </svg>
      <div class="mini">
        <button aria-label="Refit"><svg class="i16"><use href="#refitS"/></svg></button>
        <button aria-label="Zoom in"><svg class="i16"><use href="#zinS"/></svg></button>
        <button aria-label="Zoom out"><svg class="i16"><use href="#zoutS"/></svg></button>
        <button aria-label="Repaint"><svg class="i18"><use href="#repaint"/></svg></button>
        <button class="more" aria-label="Rendering"><svg class="i16"><use href="#render"/></svg></button>
        <button class="more" aria-label="Display style"><svg class="i16"><use href="#cube"/></svg></button>
        <button class="more" aria-label="Saved orientations"><svg class="i16"><use href="#saved"/></svg></button>
        <button aria-label="View manager"><svg class="i16"><use href="#manage"/></svg></button>
        <button aria-label="Perspective"><svg class="i16"><use href="#persp"/></svg></button>
        <button class="more" aria-label="Datum display"><svg class="i18" viewBox="0 0 18 18"><path d="M1 1l4 4M5 1L1 5M4 15l3-6M9 7l2-5M13 1l4 4M10 8v6l-3 3M10 14h7" fill="none" stroke="#6d5a2f" stroke-width="1.500"/></svg></button>
        <button class="on" aria-label="Annotation display"><svg class="i20"><use href="#note"/></svg></button>
        <button class="on" aria-label="Spin center"><svg class="i20"><use href="#spin"/></svg></button>
      </div>
      <p class="watermark"><span>莫西网</span>www.3dmox.com</p>
    </main>
  </div>

  <div class="tooltip" role="tooltip">
    <div class="tip-head"><svg class="i16"><use href="#ball"/></svg><b>Appearances</b><span>(Ctrl+Shift+A)</span></div>
    <div>Appearance gallery</div>
  </div>
</section>
</body>
</html>
```
FILE: styles.css
```css
* { box-sizing: border-box; }
html, body { height: 100%; }
body {
  margin: 0;
  position: relative;
  overflow: hidden;
  background: linear-gradient(#66eafa 0 198px, #0000a8 198px 340px, #001c40 100%);
  font: 11px/15px "Noto Sans", "Open Sans", sans-serif;
  color: #33383b;
}
button { font: inherit; color: inherit; background: none; border: 0; padding: 0; margin: 0; }
svg { display: block; flex: none; }
.defs { position: absolute; width: 0; height: 0; }
.i12 { width: 12px; height: 12px; }
.i14 { width: 14px; height: 14px; }
.i16 { width: 16px; height: 16px; }
.i18 { width: 18px; height: 18px; }
.i20 { width: 20px; height: 20px; }
.i32 { width: 32px; height: 32px; }
.caret { width: 8px; height: 6px; color: #4f5558; }
.caret.pale { color: #b4b7b8; }
.caret.white { color: #fff; }

.window { position: absolute; display: flex; flex-direction: column; }
.window-back { inset: 0 0 auto 0; height: 162px; background: #e9edee; border-bottom: 1px solid #7c8589; }
.window-front { inset: 48px 7px 0 -7px; background: #ecf0f1; }

.titlebar { height: 28px; flex: none; background: #676d70; display: grid; grid-template-columns: 1fr auto 1fr; align-items: center; color: #f2f3f3; }
.caption { margin: 0; font: 400 13px/18px "Open Sans", "Noto Sans", sans-serif; }
.quick { display: flex; align-items: center; padding-left: 11px; }
.brand { font: 20px/18px "Lato", sans-serif; margin-left: 6px; width: 48px; padding-bottom: 2px; white-space: nowrap; }
.brand sup { font-size: 6px; line-height: 6px; vertical-align: 7px; }
.vline { width: 1px; height: 24px; margin: 0 5px; background: #8f9496; }
.vline.end { margin: 0 4px 0 1px; }
.q { height: 24px; width: 24px; display: flex; align-items: center; gap: 7px; flex: none; }
.q.wide { width: 38px; }
.q.last { width: 20px; margin-left: 15px; }
.vline + .q:last-child { width: 16px; }
.controls { display: flex; justify-content: flex-end; gap: 15px; padding-right: 11px; }

.tabs { height: 27px; flex: none; background: #3c4345; display: flex; color: #eef0f0; }
.tab { padding: 0 22px 0 23px; white-space: nowrap; height: 27px; font: 13px/18px "Open Sans", "Noto Sans", sans-serif; }
.tab.file { width: 59px; padding: 0; background: #4ebc33; }
.tab.active { background: #ecf0f1; color: #4f8f2f; }
.tab-tools { margin-left: auto; padding-right: 8px; padding-bottom: 3px; display: flex; align-items: center; gap: 10px; }
.help { font: bold 15px/18px "Noto Sans", sans-serif; color: #fff; }

.ribbon { flex: none; display: flex; height: 107px; border-bottom: 1px solid #7c8589; background: #ecf0f1; }
.group { display: flex; flex-direction: column; border-right: 1px solid #989fa3; padding: 2px 1px 0; margin: 0 0 2px; flex: none; }
.g-vis { width: 122px; }
.g-app { width: 128px; padding-left: 3px; }
.g-ori { width: 438px; padding-left: 0; }
.g-dis { width: 220px; }
.g-show { width: 151px; padding-left: 2px; }
.g-win { width: 165px; padding-left: 3px; }
.tools { display: flex; height: 83px; align-items: flex-start; }
.label { text-align: center; height: 20px; line-height: 20px; }
.label .caret, .big span .caret { display: inline-block; vertical-align: 1px; }
.big { display: flex; flex-direction: column; align-items: center; height: 79px; padding-top: 4px; text-align: center; border: 1px solid transparent; white-space: nowrap; flex: none; }
.big .i32 { margin-bottom: 8px; }
.big > .caret { margin-top: 4px; }
.big:disabled, .small:disabled { color: #a9adaf; }
.w40 { width: 40px; }
.w44 { width: 44px; }
.w50 { width: 50px; }
.w56 { width: 56px; }
.w64 { width: 64px; }
.w70 { width: 70px; }
.w88 { width: 88px; }
.hot { width: 76px; border-color: #8fcbe0; background: linear-gradient(#e9f1f4 0 41px, #8fcbe0 41px 42px, #d3f0fc 42px); }
.stack { display: flex; flex-direction: column; padding-left: 3px; }
.g-ori .stack { width: 84px; padding-left: 2px; }
.small { display: flex; align-items: center; gap: 4px; height: 26px; white-space: nowrap; }
.split { width: 1px; height: 70px; margin: 4px 2px; background: #a5abae; }
.toggles { display: grid; grid-template-columns: repeat(6, 24px); row-gap: 14px; padding-top: 8px; }
.toggles button, .mini button { width: 24px; height: 24px; display: grid; place-items: center; border: 1px solid transparent; }
.toggles .on, .mini .on { background: #c8cccd; border-color: #858c8f; }
.dim { font: bold 8px "Liberation Sans", sans-serif; fill: #222; }

.work { flex: 1; min-height: 0; display: flex; }
.side { width: 270px; flex: none; padding-left: 7px; border-right: 3px solid #90989d; display: flex; flex-direction: column; }
.side-tabs { display: flex; background: #8e979b; height: 29px; flex: none; }
.side-tab { display: flex; align-items: center; gap: 5px; padding: 0 8px; color: #eef1f2; white-space: nowrap; }
.side-tab.current { width: 93px; gap: 7px; padding: 0 0 0 1px; background: #ecf0f1; color: #33383b; }
.mtree { width: 16px; height: 20px; }
.side-head { display: flex; align-items: center; height: 28px; padding: 0 100px 0 21px; justify-content: space-between; }
.side-head h2 { margin: 0; font: 700 12px/15px "Open Sans", "Noto Sans", sans-serif; }
.filter { display: flex; align-items: center; height: 28px; padding-left: 5px; gap: 4px; }
.field { display: flex; align-items: center; width: 187px; height: 27px; background: #fff; border: 1px solid #6f777b; padding-right: 4px; }
.field input { flex: 1; min-width: 0; border: 0; outline: 0; background: none; font: inherit; }
.filter > .caret { margin-left: 2px; }
.plus { font: bold 20px/20px "Noto Sans", sans-serif; color: #777d80; padding-left: 5px; }
.tree-box { flex: 1; min-height: 0; display: flex; overflow: hidden; margin-top: 4px; padding-right: 5px; }
.tree { flex: 1; margin: 0; padding: 0; list-style: none; }
.tree li { display: flex; align-items: center; gap: 5px; height: 20px; padding-left: 24px; white-space: nowrap; }
.tree .root { padding-left: 4px; gap: 4px; }
.tree .root span { background: #b4e1f8; line-height: 18px; padding: 0 1px; }
.tree .open::before { content: ""; border: 4px solid transparent; border-left: 8px solid #7d8386; border-right: 0; margin: 0 2px 0 -15px; }
.tree .dim-row { color: #b9bdbe; }
.scroll { width: 15px; display: flex; flex-direction: column; background: #dcdfe0; border: 1px solid #c2c6c8; }
.sb { height: 15px; flex: none; display: grid; place-items: center; background: #fafafa; border-bottom: 1px solid #b1b6b8; }
.sb::before { content: ""; border: 4px solid transparent; border-top: 0; border-bottom: 4px solid #8b9194; }
.sb.down { height: 6px; }
.sb.down::before { display: none; }
.thumb { height: 98px; background: #fafafa; border-bottom: 1px solid #b1b6b8; }
.track { flex: 1; }

.canvas { position: relative; flex: 1; min-width: 0; background: #e9e9ee; display: flex; justify-content: center; align-items: flex-start; }
.model { position: absolute; inset: 0; width: 100%; height: 100%; }
.mini { position: relative; display: flex; gap: 2px; margin-top: 7px; padding: 3px 4px; background: #eef1f2; border: 1px solid #757c80; }
.mini button { position: relative; }
.mini .more::after { content: ""; position: absolute; right: 0; bottom: 0; border: 2px solid #444; border-left-color: transparent; border-top-color: transparent; }
.watermark { position: absolute; left: 145px; top: 134px; margin: 0; font: 48px/70px "Liberation Mono", monospace; color: #f5f3f4; text-shadow: 1px 1px 1px #4d4033; white-space: nowrap; }
.watermark span { font: 300 57px/70px "Noto Sans CJK SC", sans-serif; }

.tooltip { position: absolute; left: 169px; top: 165px; width: 205px; padding: 11px 14px 13px; background: #fff; border: 1px solid #c5c8ca; box-shadow: 2px 2px 1px #7f8588; color: #222; white-space: nowrap; }
.tip-head { display: flex; align-items: center; gap: 6px; margin-bottom: 8px; }
.tip-head .i16 { margin-right: 1px; }
```
